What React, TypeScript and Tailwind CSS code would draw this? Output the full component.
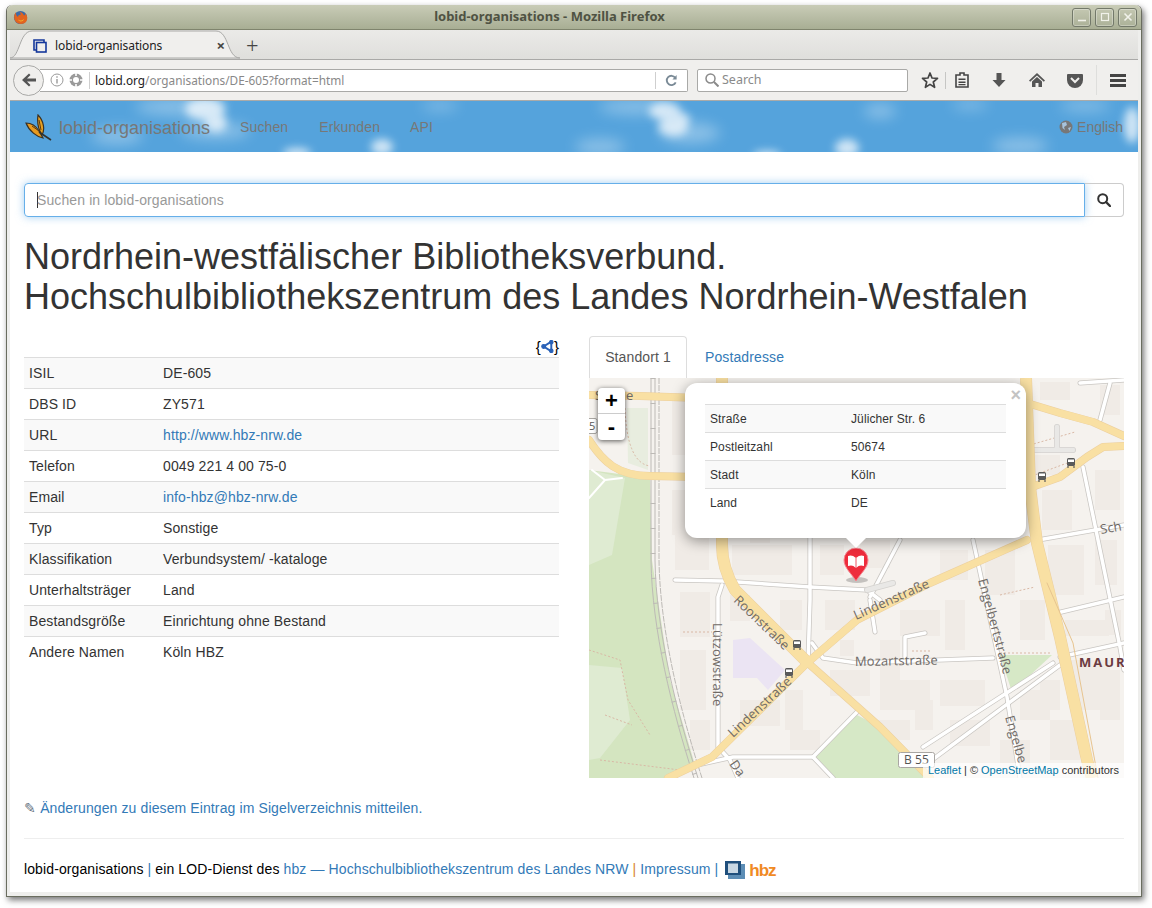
import React from 'react';

const details: [string, string, boolean?][] = [
  ['ISIL', 'DE-605'],
  ['DBS ID', 'ZY571'],
  ['URL', 'http://www.hbz-nrw.de', true],
  ['Telefon', '0049 221 4 00 75-0'],
  ['Email', 'info-hbz@hbz-nrw.de', true],
  ['Typ', 'Sonstige'],
  ['Klassifikation', 'Verbundsystem/ -kataloge'],
  ['Unterhaltsträger', 'Land'],
  ['Bestandsgröße', 'Einrichtung ohne Bestand'],
  ['Andere Namen', 'Köln HBZ'],
];

const address: [string, string][] = [
  ['Straße', 'Jülicher Str. 6'],
  ['Postleitzahl', '50674'],
  ['Stadt', 'Köln'],
  ['Land', 'DE'],
];

// map geometry, in screenshot coordinates
const yellowRoads = [
  'M589 395 L640 396 L700 398 L860 398 L1000 396 L1027 403 L1060 413 L1093 422 L1124 436',
  'M589 440 C603 462 618 476 650 476 L700 477',
  'M808 663 L880 727 L930 778',
  'M668 778 L712 757 L807 663 L857 620 L930 583 L1027 540',
  'M1032 487 L1060 477 L1087 457 L1103 447 L1124 446',
];

const wideRoads = [
  'M722 378 L722 545 Q722 568 735 590 L808 663',
  'M1026 378 L1030 487 L1037 543 L1060 637 L1087 760 L1092 778',
];

const whiteRoads = [
  'M675 580 L722 581 L810 587 L867 590 L880 600',
  'M722 585 L718 597 L718 747 L730 760 L738 778',
  'M810 530 L810 600 L808 663',
  'M697 765 L733 757 L813 757 L857 712',
  'M813 757 L833 778',
  'M812 643 L823 658 L857 663 L993 658',
  'M870 597 L900 540',
  'M870 600 L875 632',
  'M973 540 L1007 697 L1020 778',
  'M1038 540 L1124 525',
  'M1057 613 L1124 597',
  'M1083 467 L1120 647 L1124 670',
  'M1060 657 L1124 643',
  'M923 747 L1053 663',
  'M932 760 L1060 665',
  'M905 657 L905 637 L925 633',
  'M1100 420 L1110 383',
  'M1080 383 L1124 380',
];

const serviceRoads = [
  'M1030 450 L1073 450',
  'M1057 427 L1057 448',
  'M867 590 L893 583',
];

const buildings: [number, number, number, number][] = [
  [672, 395, 34, 60], [672, 490, 36, 45], [732, 545, 60, 30], [735, 500, 50, 30],
  [675, 530, 34, 40], [820, 545, 24, 30], [730, 595, 20, 26], [680, 592, 30, 45],
  [680, 650, 26, 60], [740, 700, 40, 26], [785, 690, 18, 40], [825, 600, 30, 30],
  [780, 600, 22, 30], [830, 670, 40, 26], [790, 730, 30, 20], [880, 640, 20, 40],
  [900, 610, 40, 26], [945, 600, 20, 50], [880, 680, 50, 30], [940, 680, 45, 26],
  [870, 720, 40, 20], [940, 550, 28, 30], [1042, 490, 30, 40], [1048, 545, 36, 50],
  [1095, 540, 22, 45], [1065, 620, 44, 16], [1070, 660, 40, 50], [1020, 600, 25, 40],
  [1100, 670, 20, 50], [1020, 690, 30, 30], [1050, 720, 30, 40], [1100, 385, 20, 30],
  [1040, 382, 30, 18], [1095, 470, 25, 40], [985, 550, 30, 45], [860, 540, 30, 28],
  [1000, 740, 30, 30], [950, 720, 40, 26], [1040, 680, 20, 30], [690, 720, 20, 30],
  [1035, 455, 25, 20], [750, 535, 20, 8], [695, 600, 12, 30], [840, 640, 14, 16],
  [915, 700, 18, 30], [1105, 610, 16, 25],
];

const trams = [[1042, 477], [1071, 463], [797, 645], [789, 673]];

const labelClass = 'fill-[#6f6a66] text-[13px]';

function MapDrawing() {
  return (
    <svg viewBox="589 378 535 400" className="block h-full w-full" style={{ fontFamily: '"Open Sans", sans-serif' }}>
      <rect x="589" y="378" width="535" height="400" fill="#f5f2ee" />
      {buildings.map(([x, y, w, h], i) => (
        <rect key={i} x={x} y={y} width={w} height={h} fill="#f0ebe6" />
      ))}
      <path d="M589 470 L650 478 L652 560 L670 680 L695 765 L668 778 L589 778 Z" fill="#d4e5c0" />
      <path d="M589 470 L625 478 L612 555 L589 565 Z M589 665 L622 668 L630 720 L600 758 L589 760 Z" fill="#dfebd2" />
      <path d="M627 408 L648 408 L648 470 L628 463 Z" fill="#e8eddf" />
      <path d="M813 757 L857 715 L880 727 L925 778 L833 778 Z" fill="#d6e8c6" />
      <path d="M1000 655 L1052 655 L1012 692 Z" fill="#d6e8c6" />
      <path d="M733 640 L750 638 L785 670 L768 690 L757 678 L733 678 Z" fill="#ebe4f3" />
      <path d="M589 650 L620 660 L628 700 L650 735 M605 715 L632 725 M625 408 Q627 463 650 466 M683 632 L712 632 M600 760 L680 770" fill="none" stroke="#d9b8a5" strokeWidth="1" strokeDasharray="2 2" />
      <path d="M1030 445 L1075 432 M1000 595 L1035 587 M912 651 L930 651 M1000 653 L1050 653 M1032 476 L1070 462" fill="none" stroke="#d9b8a5" strokeWidth="1" strokeDasharray="2 2" />
      <g fill="none" stroke="#bdbab6" strokeWidth="1">
        <path d="M651 378 L651 560 C652 630 672 710 694 778" />
        <path d="M655 378 L655 560 C656 630 676 710 698 778" />
        <path d="M659 378 L659 560 C660 630 680 710 702 778" strokeDasharray="6 1" />
        <path d="M653 378 L653 560 C654 630 674 710 696 778" strokeWidth="5" strokeDasharray="1 24" />
      </g>
      <g fill="none" strokeLinecap="round" strokeLinejoin="round">
        {whiteRoads.map((d) => <path key={d} d={d} stroke="#c9c6c2" strokeWidth="5" />)}
        {whiteRoads.map((d) => <path key={d} d={d} stroke="#ffffff" strokeWidth="3.5" />)}
        {serviceRoads.map((d) => <path key={d} d={d} stroke="#d4d2cf" strokeWidth="6" />)}
        {serviceRoads.map((d) => <path key={d} d={d} stroke="#e9e8e6" strokeWidth="4.5" />)}
        <path d="M589 498 L605 480 L622 478 M605 480 L592 470" stroke="#ffffff" strokeWidth="2" />
        {wideRoads.map((d) => <path key={d} d={d} stroke="#eccf9e" strokeWidth="12" strokeLinecap="butt" />)}
        {yellowRoads.map((d) => <path key={d} d={d} stroke="#eccf9e" strokeWidth="8" />)}
        {wideRoads.map((d) => <path key={d} d={d} stroke="#f9e0a3" strokeWidth="11" strokeLinecap="butt" />)}
        {yellowRoads.map((d) => <path key={d} d={d} stroke="#f9e0a3" strokeWidth="7" />)}
        <path d="M1047 583 L1073 643 L1098 778" stroke="#e7c48f" strokeWidth="1" />
      </g>
      <text x="595" y="400" className={labelClass}>S</text>
      <text x="626" y="400" className={labelClass}>e</text>
      <text className={labelClass} transform="translate(733 601) rotate(44)">Roonstraße</text>
      <text className={labelClass} transform="translate(713 623) rotate(90)">Lützowstraße</text>
      <text className={labelClass} transform="translate(733 738) rotate(-43)">Lindenstraße</text>
      <text className={labelClass} transform="translate(856 620) rotate(-24)">Lindenstraße</text>
      <text className={labelClass} transform="translate(855 666) rotate(-1)">Mozartstraße</text>
      <text className={labelClass} transform="translate(978 580) rotate(75)">Engelbertstraße</text>
      <text className={labelClass} transform="translate(1005 717) rotate(74)">Engelbe</text>
      <text className={labelClass} transform="translate(1101 534) rotate(-10)">Sch</text>
      <text className={labelClass} transform="translate(729 764) rotate(55)">Da</text>
      <text x="1079" y="667" className="fill-[#6b3a40] text-[13px] font-bold tracking-[2px]">MAUR</text>
      <g>
        <rect x="898.5" y="752.5" width="36" height="15" rx="2" fill="#ffffff" stroke="#a9a6a2" />
        <text x="904" y="764" className="fill-[#555] text-[12px]">B 55</text>
        <rect x="585" y="418.5" width="12" height="15" rx="2" fill="#ffffff" stroke="#a9a6a2" />
        <text x="589" y="430" className="fill-[#555] text-[11px]">5</text>
      </g>
      {trams.map(([x, y]) => (
        <g key={`${x}-${y}`}>
          <rect x={x - 4} y={y - 5} width="8" height="8" rx="1.5" fill="#5a5a5a" />
          <rect x={x - 3} y={y - 3.5} width="6" height="2.5" fill="#ffffff" />
          <path d={`M${x - 3} ${y + 3} V${y + 5} M${x + 3} ${y + 3} V${y + 5}`} stroke="#5a5a5a" strokeWidth="1.2" />
        </g>
      ))}
      <ellipse cx="857" cy="580" rx="11" ry="3" fill="#000000" opacity="0.2" />
      <path d="M856 581 C852 574 844 568 844 560 A12 12 0 0 1 868 560 C868 568 860 574 856 581 Z" fill="#ee2c3c" stroke="#f58a92" strokeWidth="1" />
      <path d="M856 558 C853 555 850 555 848 556 L848 566 C851 565 853 565 856 568 C859 565 861 565 864 566 L864 556 C862 555 859 555 856 558 Z" fill="#ffffff" />
      <path d="M856 558 L856 568" stroke="#ee2c3c" strokeWidth="0.8" />
    </svg>
  );
}

function FirefoxLogo() {
  return (
    <svg viewBox="0 0 16 16" className="h-[15px] w-[15px]">
      <circle cx="8" cy="8" r="7" fill="#3f6aa6" />
      <path d="M3 2.5 C1 5 0.5 9 2.5 12 C5 15.5 11 16 14 12.5 C16 10 15.5 5.5 13 3.5 C13.5 5.5 12.5 6 11.5 5.5 C11 3.5 9 2 7 2 C8 3 8.5 4 8 5 C6 5 5 6 5.5 7.5 C4 7 3 5 3 2.5 Z" fill="#e2641f" />
      <path d="M5 9 C6 12 10 12 12 9 C11 13 6 13.5 5 9 Z" fill="#f4b52e" />
    </svg>
  );
}

function WindowButton({ children }: { children: React.ReactNode }) {
  return (
    <div className="flex h-[19px] w-[19px] items-center justify-center rounded-[3px] border border-[#73796a] shadow-[inset_0_0_0_1px_rgba(255,255,255,0.3)]">
      <svg viewBox="0 0 12 12" className="h-3 w-3" fill="none" stroke="#f1f2ea">{children}</svg>
    </div>
  );
}

function ToolIcon({ children, w = 18 }: { children: React.ReactNode; w?: number }) {
  return (
    <svg viewBox="0 0 18 18" width={w} height={w} className="block" fill="#555555">{children}</svg>
  );
}

function BrowserChrome() {
  return (
    <div className="text-[#333]" style={{ fontFamily: '"Noto Sans", sans-serif' }}>
      <div className="flex h-[25px] items-center rounded-t-[6px] border-b border-[#7f846d] bg-gradient-to-b from-[#c9ccb7] to-[#a8ae94] pl-[6px] pr-[4px]">
        <FirefoxLogo />
        <div className="-ml-[1px] flex-1 text-center text-[13px] font-bold text-[#4f5243]">lobid-organisations - Mozilla Firefox</div>
        <div className="flex gap-[4px]">
          <WindowButton><path d="M2 9.5 H10" strokeWidth="1.6" /></WindowButton>
          <WindowButton><rect x="2.5" y="2.5" width="7" height="7" strokeWidth="1.2" /></WindowButton>
          <WindowButton><path d="M2.5 2.5 L9.5 9.5 M9.5 2.5 L2.5 9.5" strokeWidth="1.6" /></WindowButton>
        </div>
      </div>
      <div className="mx-[3px] flex h-[30px] items-end border-b border-[#a9a9a7] bg-gradient-to-b from-[#ebeae8] to-[#dfdfdc]">
        <div className="relative flex h-[29px] w-[230px] items-center pl-[23px] pr-[15px] pt-[2px]">
          <svg viewBox="0 0 230 29" className="absolute inset-0 h-[29px] w-[230px]">
            <path d="M0 28 C10 28 9 1 22 1 L206 1 C219 1 217 28 230 28 Z" fill="#f0efed" stroke="#a9a9a7" />
          </svg>
          <svg viewBox="0 0 14 14" className="relative h-[14px] w-[14px]" fill="none" stroke="#14379b" strokeWidth="1.6">
            <path d="M3 11 H1 V1 H11 V3" />
            <rect x="3.5" y="3.5" width="9.5" height="9.5" />
          </svg>
          <span className="relative ml-[8px] flex-1 text-[12px] tracking-[-0.1px] text-[#222]">lobid-organisations</span>
          <span className="relative text-[15px] font-bold leading-none text-[#444]">×</span>
        </div>
        <span className="mb-[1px] ml-[6px] text-[22px] font-light leading-[26px] text-[#444]">+</span>
      </div>
      <div className="mx-[3px] flex h-[41px] items-center border-b border-[#aaaaa8] bg-[#f0efed] pl-[3px]">
        <div className="relative z-10 flex h-[31px] w-[31px] items-center justify-center rounded-full border border-[#a9a9a7] bg-[#f0efed]">
          <svg viewBox="0 0 16 16" className="h-[16px] w-[16px]" fill="#555"><path d="M8 1.5 L1 8 L8 14.5 L9.5 13 L6 9.5 H15 V6.5 H6 L9.5 3 Z" /></svg>
        </div>
        <div className="-ml-[4px] flex h-[23px] w-[648px] items-center rounded-r-[2px] border border-l-0 border-[#a9a9a7] bg-white pl-[10px]">
          <svg viewBox="0 0 14 14" className="h-[14px] w-[14px]" fill="none" stroke="#9a9a9a"><circle cx="7" cy="7" r="6" /><path d="M7 6 V10.5 M7 3.2 V4.8" strokeWidth="1.4" /></svg>
          <svg viewBox="0 0 14 14" className="ml-[5px] h-[14px] w-[14px]"><circle cx="7" cy="7" r="6.5" fill="#9a9a9a" /><circle cx="7" cy="7" r="3" fill="#ffffff" /><path d="M7 0 V3 M7 11 V14 M0 7 H3 M11 7 H14" stroke="#ffffff" strokeWidth="1.6" /></svg>
          <div className="ml-[6px] h-[17px] w-px bg-[#cfcfcf]" />
          <div className="ml-[5px] flex-1 pt-[1px] text-[11.8px] text-[#888]"><span className="text-[#222]">lobid.org</span>/organisations/DE-605?format=html</div>
          <div className="h-[17px] w-px bg-[#cfcfcf]" />
          <svg viewBox="0 0 14 14" className="mx-[9px] h-[13px] w-[13px]" fill="none" stroke="#7a8a96" strokeWidth="2"><path d="M11.5 9 A5 5 0 1 1 11 4" /><path d="M12.5 1 V6 H8 Z" fill="#7a8a96" stroke="none" /></svg>
        </div>
        <div className="ml-[9px] flex h-[23px] w-[211px] items-center rounded-[2px] border border-[#a9a9a7] bg-white pl-[7px] text-[12.5px] text-[#8a8a8a]">
          <svg viewBox="0 0 14 14" className="h-[14px] w-[14px]" fill="none" stroke="#8a8a8a" strokeWidth="1.5"><circle cx="5.5" cy="5.5" r="4.5" /><path d="M9 9 L13.5 13.5" strokeWidth="2" /></svg>
          <span className="ml-[2px] pt-[1px] pl-[1px]">Search</span>
        </div>
        <div className="ml-[13px]">
          <ToolIcon>
            <path d="M9 2 L11 7 L16.5 7.4 L12.3 11 L13.6 16.3 L9 13.4 L4.4 16.3 L5.7 11 L1.5 7.4 L7 7 Z" fill="none" stroke="#444" strokeWidth="1.7" strokeLinejoin="round" />
          </ToolIcon>
        </div>
        <div className="ml-[6px] h-[17px] w-px bg-[#c6c6c4]" />
        <div className="ml-[7px]">
          <ToolIcon>
            <path d="M7 2 H11 V4 H15 V16 H3 V4 H7 Z" fill="none" stroke="#444" strokeWidth="1.6" />
            <path d="M5.5 7.5 H12.5 V9 H5.5 Z M5.5 10.5 H12.5 V12 H5.5 Z M5.5 13 H12.5 V14.3 H5.5 Z" fill="#444" />
          </ToolIcon>
        </div>
        <div className="ml-[19px]">
          <ToolIcon><path d="M6.5 2 H11.5 V9 H15.5 L9 16 L2.5 9 H6.5 Z" /></ToolIcon>
        </div>
        <div className="ml-[20px]">
          <ToolIcon><path d="M9 2 L17 9.5 L15.8 10.7 L9 4.5 L2.2 10.7 L1 9.5 Z M4 10.5 L9 6 L14 10.5 V16 H10.5 V12 H7.5 V16 H4 Z" /></ToolIcon>
        </div>
        <div className="ml-[20px]">
          <ToolIcon><path d="M2 3 H16 Q17 3 17 4 V9 A8 8 0 0 1 1 9 V4 Q1 3 2 3 Z" /><path d="M5 7 L9 11 L13 7" fill="none" stroke="#f0efed" strokeWidth="2" /></ToolIcon>
        </div>
        <div className="ml-[12px] h-[30px] w-px bg-[#dededc]" />
        <div className="ml-[12px]">
          <ToolIcon><path d="M1 3 H17 V6 H1 Z M1 8 H17 V11 H1 Z M1 13 H17 V16 H1 Z" fill="#444" /></ToolIcon>
        </div>
      </div>
    </div>
  );
}

function ButterflyLogo() {
  return (
    <svg viewBox="0 0 28 28" className="h-[28px] w-[28px]">
      <path d="M2 9 C7 9 12 12 15 17 L19 24 C13 23 5 17 2 9 Z" fill="#e89a1e" stroke="#3b3122" strokeWidth="1.2" />
      <path d="M14 1 C13 8 14 15 18 21 C21 16 20 7 14 1 Z" fill="#e8a021" stroke="#3b3122" strokeWidth="1.2" />
      <path d="M8 12 L15 17 M15 6 L17 16" stroke="#5a3b12" strokeWidth="1" />
      <path d="M15 18 L27 26" stroke="#33312b" strokeWidth="1.6" />
    </svg>
  );
}

function Banner() {
  const bright = [
    [195, 8, 20, 11], [206, 22, 11, 9], [655, 10, 16, 9], [663, 26, 15, 9], [672, 18, 8, 6],
    [287, 52, 14, 5], [372, 46, 11, 8], [757, 54, 14, 4], [837, 47, 12, 9], [1122, 24, 8, 18],
  ];
  const faint = [
    [170, 6, 45, 8], [107, 35, 26, 8], [590, 46, 25, 8], [625, 6, 36, 7], [870, 10, 16, 7], [960, 4, 18, 4],
    [1010, 45, 28, 8], [1075, 5, 25, 5], [430, 5, 18, 4], [205, 30, 35, 8], [680, 32, 30, 10],
  ];
  return (
    <div className="relative mx-[3px] flex h-[51px] items-center overflow-hidden bg-[#55a3dc] pl-[14px] pr-[15px] text-[14px] text-[#777]">
      <svg viewBox="0 0 1128 51" className="absolute inset-0 h-[51px] w-[1128px]">
        <defs>
          <filter id="cloud" x="-10%" y="-50%" width="120%" height="200%"><feGaussianBlur stdDeviation="4.5" /></filter>
          <filter id="haze" x="-10%" y="-50%" width="120%" height="200%"><feGaussianBlur stdDeviation="7" /></filter>
        </defs>
        <g filter="url(#haze)" fill="#ffffff" opacity="0.32">
          {faint.map(([cx, cy, rx, ry]) => <ellipse key={`${cx}-${cy}`} cx={cx} cy={cy} rx={rx} ry={ry} />)}
        </g>
        <g filter="url(#cloud)" fill="#ffffff" opacity="0.72">
          {bright.map(([cx, cy, rx, ry]) => <ellipse key={`${cx}-${cy}`} cx={cx} cy={cy} rx={rx} ry={ry} />)}
        </g>
      </svg>
      <div className="relative mt-[3px]"><ButterflyLogo /></div>
      <span className="relative ml-[7px] mt-[3px] text-[18px]">lobid-organisations</span>
      <span className="relative ml-[30px] mt-[1px] tracking-[0.11px]">Suchen</span>
      <span className="relative ml-[31px] mt-[1px] tracking-[0.11px]">Erkunden</span>
      <span className="relative ml-[30px] mt-[1px] tracking-[0.11px]">API</span>
      <span className="relative ml-auto mt-[1px] flex items-center gap-[4px]">
        <svg viewBox="0 0 14 14" className="h-[14px] w-[14px]"><circle cx="7" cy="7" r="6.5" fill="#777" /><path d="M3 3 L7 2 L8 5 L5 7 L6 10 L3.5 8 Z M9 8 L12 7 L10.5 11 Z" fill="#a7c4dd" /></svg>
        English
      </span>
    </div>
  );
}

function DetailsTable() {
  return (
    <table className="w-full border-collapse border-b-0">
      <tbody>
        {details.map(([label, value, isLink], i) => (
          <tr key={label} className={i % 2 === 0 ? 'bg-[#f9f9f9]' : ''}>
            <td className="h-[31px] w-[134px] border-t border-[#ddd] px-[5px] py-[5px]">{label}</td>
            <td className="border-t border-[#ddd] px-[5px] py-[5px]">
              {isLink ? <a className="text-[#337ab7]">{value}</a> : value}
            </td>
          </tr>
        ))}
      </tbody>
    </table>
  );
}

function MapPopup() {
  return (
    <div className="absolute left-[96px] top-[5px] h-[155px] w-[341px] rounded-[12px] bg-white pl-[20px] pr-[20px] pt-[21px] text-[12px] text-[#333] shadow-[0_3px_14px_rgba(0,0,0,0.4)]">
      <span className="absolute right-[5px] top-[2px] text-[18px] font-bold leading-[20px] text-[#c3c3c3]">×</span>
      <table className="w-full border-collapse">
        <tbody>
          {address.map(([label, value], i) => (
            <tr key={label} className={i % 2 === 0 ? 'bg-[#f9f9f9]' : ''}>
              <td className="h-[28px] w-[141px] border-t border-[#ddd] px-[5px]">{label}</td>
              <td className="border-t border-[#ddd] px-[5px]">{value}</td>
            </tr>
          ))}
        </tbody>
      </table>
      <div className="absolute left-[161px] top-[155px] h-0 w-0 border-x-[10px] border-t-[10px] border-x-transparent border-t-white" />
    </div>
  );
}

function MapPanel() {
  return (
    <div className="relative h-[400px] overflow-hidden">
      <MapDrawing />
      <div className="absolute left-[9px] top-[10px] w-[27px] rounded-[4px] bg-white text-center text-[22px] font-bold leading-[26px] text-black shadow-[0_1px_5px_rgba(0,0,0,0.65)]">
        <div className="h-[26px] border-b border-[#ccc]">+</div>
        <div className="h-[26px]">-</div>
      </div>
      <MapPopup />
      <div className="absolute bottom-0 right-0 bg-white/70 px-[5px] text-[11px] leading-[15px] tracking-[-0.01px] text-[#333]">
        <a className="text-[#0078a8]">Leaflet</a> | © <a className="text-[#0078a8]">OpenStreetMap</a> contributors
      </div>
    </div>
  );
}

function HbzMark() {
  return (
    <span className="ml-[7px] inline-flex items-center align-middle">
      <svg viewBox="0 0 20 18" className="h-[18px] w-[20px]">
        <rect x="3" y="3" width="17" height="15" fill="#5c8db5" />
        <rect x="0" y="0" width="16" height="14" fill="#1f4f7c" />
        <rect x="3" y="2.5" width="10" height="9.5" fill="#c9d8e4" />
      </svg>
      <span className="ml-[4px] text-[17px] font-bold leading-none tracking-[-1px] text-[#f08a24]">hbz</span>
    </span>
  );
}

export default function App() {
  return (
    <div className="h-[908px] w-[1152px] overflow-hidden bg-white pl-[6px] pt-[5px]">
      <div className="flex h-[892px] w-[1136px] flex-col rounded-t-[6px] border-x border-b border-[#6a6d5f] bg-[#eeeeec] shadow-[2px_3px_6px_rgba(0,0,0,0.55)]" style={{ fontFamily: '"Liberation Sans", Arial, sans-serif' }}>
        <BrowserChrome />
        <Banner />
        <div className="mx-[3px] mb-[4px] flex-1 bg-white px-[14px] pt-[31px] text-[14px] leading-[20px] tracking-[0.11px] text-[#333]">
          <div className="flex h-[34px]">
            <div className="flex flex-1 items-center rounded-l-[4px] border border-[#66afe9] pl-[12px] text-[#999] shadow-[0_0_8px_rgba(102,175,233,0.6)]">
              <span className="mr-[-1px] h-[16px] w-px bg-[#333]" />
              Suchen in lobid-organisations
            </div>
            <div className="flex w-[39px] items-center justify-center rounded-r-[4px] border border-l-0 border-[#ccc]">
              <svg viewBox="0 0 14 14" className="h-[14px] w-[14px]" fill="none" stroke="#333" strokeWidth="2"><circle cx="5.7" cy="5.7" r="4.5" /><path d="M9 9 L13 13" strokeWidth="2.4" strokeLinecap="round" /></svg>
            </div>
          </div>
          <h1 className="mt-[20px] text-[36px] font-normal leading-[40px] tracking-normal">
            Nordrhein-westfälischer Bibliotheksverbund.<br />Hochschulbibliothekszentrum des Landes Nordrhein-Westfalen
          </h1>
          <div className="mt-[19px] flex gap-[30px]">
            <div className="w-[535px]">
              <div className="flex h-[21px] items-center justify-end text-[15px] font-normal leading-none text-black">
                <span>{'{'}</span>
                <svg viewBox="0 0 12 12" className="h-[13px] w-[13px]" fill="#2a62b8" stroke="#2a62b8">
                  <path d="M9.5 1.5 L2.5 6 L9.5 10.5 Z" fill="none" strokeWidth="1.8" />
                  <circle cx="9.5" cy="2" r="1.6" /><circle cx="2.5" cy="6" r="1.8" /><circle cx="9.5" cy="10" r="1.6" />
                </svg>
                <span>{'}'}</span>
              </div>
              <DetailsTable />
            </div>
            <div className="w-[535px]">
              <div className="flex h-[42px]">
                <div className="flex w-[98px] items-center justify-center rounded-t-[4px] border border-b-0 border-[#ddd] pb-[1px] text-[#555]">Standort 1</div>
                <a className="ml-[2px] flex items-center px-[16px] pb-[1px] text-[#337ab7]">Postadresse</a>
              </div>
              <MapPanel />
            </div>
          </div>
          <p className="mt-[20px]">
            <span className="text-[#5f6e7c]">✎</span> <a className="text-[#337ab7]">Änderungen zu diesem Eintrag im Sigelverzeichnis mitteilen.</a>
          </p>
          <hr className="mt-[20px] border-[#eee]" />
          <p className="mt-[20px] text-black">
            lobid-organisations <span className="text-[#337ab7]">|</span> ein LOD-Dienst des <a className="text-[#337ab7]">hbz — Hochschulbibliothekszentrum des Landes NRW</a> <span className="text-[#d9822b]">|</span> <a className="text-[#337ab7]">Impressum</a> <span className="text-[#337ab7]">|</span>
            <HbzMark />
          </p>
        </div>
      </div>
    </div>
  );
}
